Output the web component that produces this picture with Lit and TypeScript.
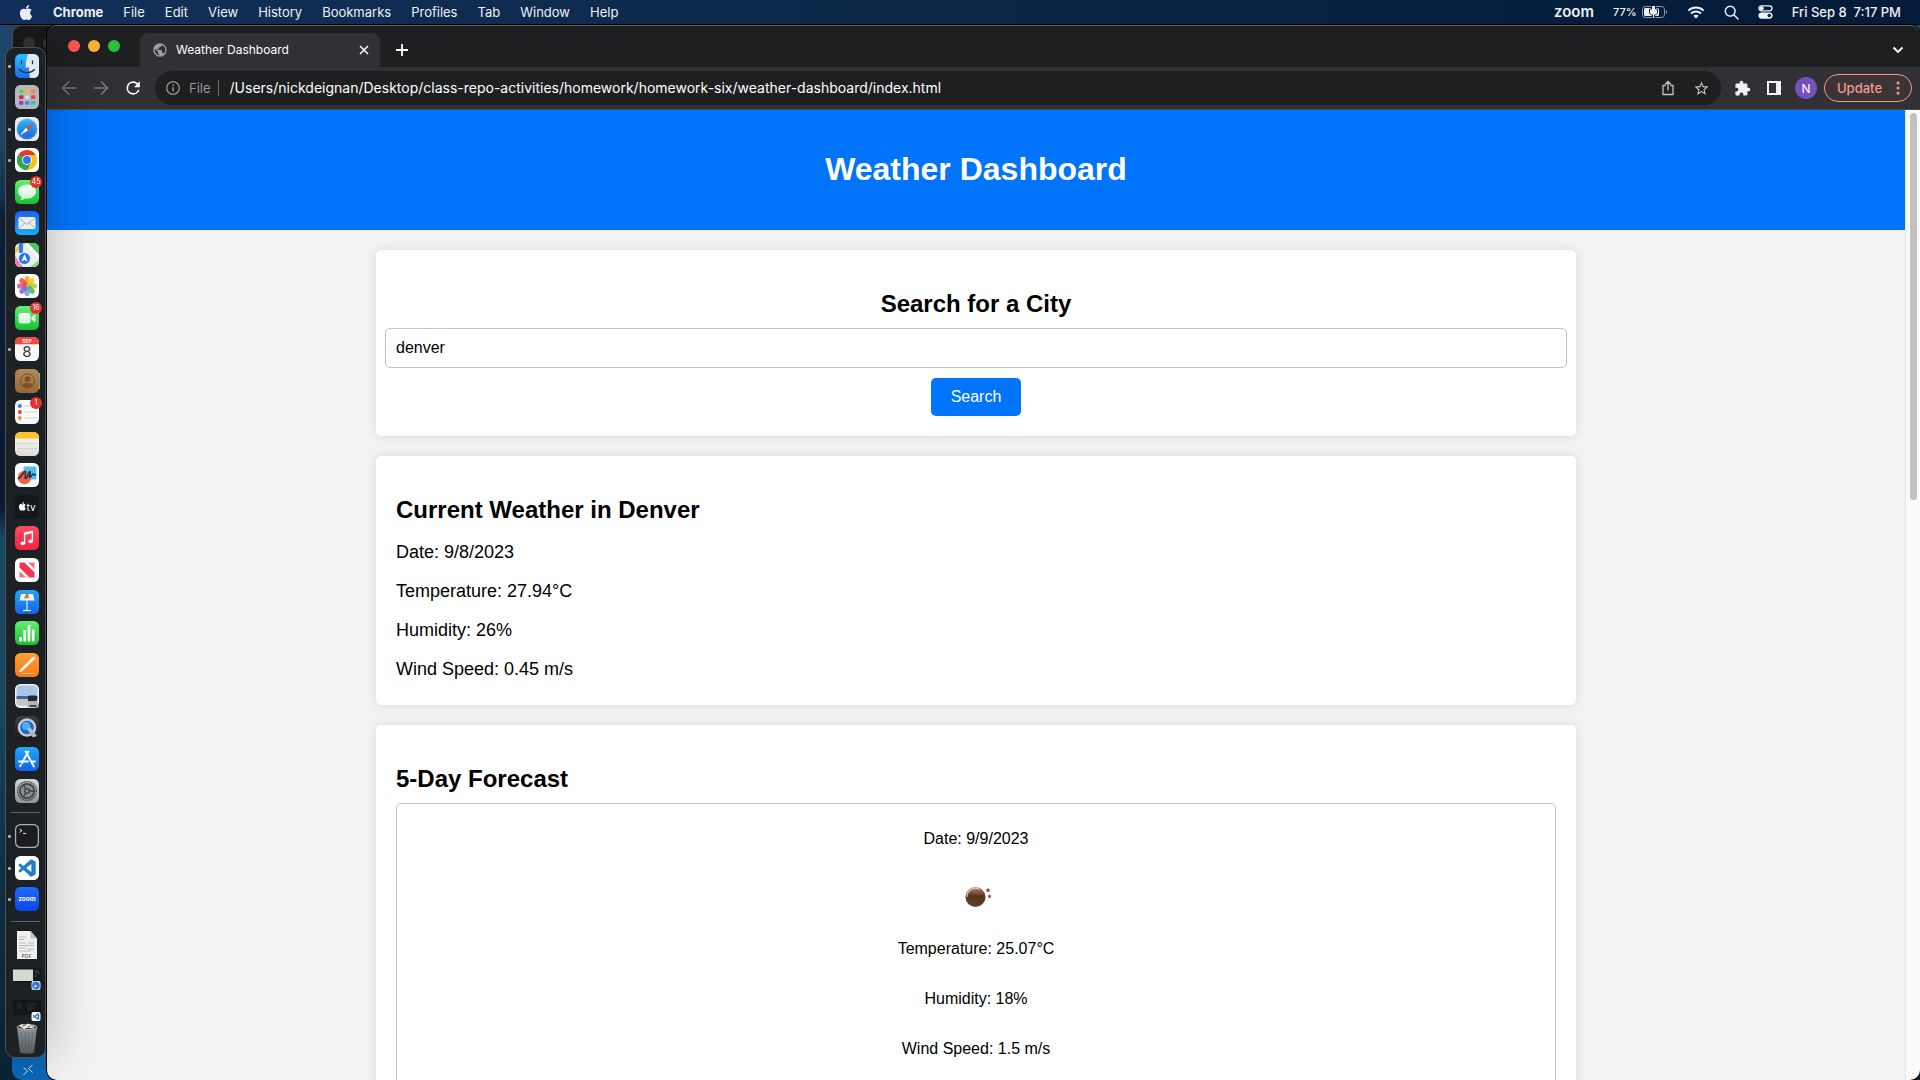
import { LitElement, html, css, svg, nothing, TemplateResult } from "lit";
import { customElement, property } from "lit/decorators.js";

type Glyph = ReturnType<typeof svg>;

interface DockItem {
  name: string;
  art: Glyph;
  running?: boolean;
  badge?: string;
}

const appleMark =
  "M12.152 6.896c-.948 0-2.415-1.078-3.96-1.04-2.04.027-3.91 1.183-4.961 3.014-2.117 3.675-.546 9.103 1.519 12.09 1.013 1.454 2.208 3.09 3.792 3.039 1.52-.065 2.09-.987 3.935-.987 1.831 0 2.35.987 3.96.948 1.637-.026 2.676-1.48 3.676-2.948 1.156-1.688 1.636-3.325 1.662-3.415-.039-.013-3.182-1.221-3.22-4.857-.026-3.04 2.48-4.494 2.597-4.559-1.429-2.09-3.623-2.324-4.39-2.376-2-.156-3.675 1.09-4.61 1.09zM15.53 3.83c.843-1.012 1.4-2.427 1.245-3.83-1.207.052-2.662.805-3.532 1.818-.78.896-1.454 2.338-1.273 3.714 1.338.104 2.715-.688 3.559-1.701";
const codeMark =
  "M23.15 2.587L18.21.21a1.494 1.494 0 0 0-1.705.29l-9.46 8.63-4.12-3.128a.999.999 0 0 0-1.276.057L.327 7.261A1 1 0 0 0 .326 8.74L3.899 12 .326 15.26a1 1 0 0 0 .001 1.479L1.65 17.94a.999.999 0 0 0 1.276.057l4.12-3.128 9.46 8.63a1.492 1.492 0 0 0 1.704.29l4.942-2.377A1.5 1.5 0 0 0 24 20.06V3.939a1.5 1.5 0 0 0-.85-1.352zm-5.146 14.861L10.826 12l7.178-5.448v10.896z";

const tile = (fill: string) => svg`<rect width="24" height="24" rx="5.4" fill=${fill}/>`;
const fade = (id: string, a: string, b: string) => svg`
  <linearGradient id=${id} x1="0" y1="0" x2="0" y2="1">
    <stop offset="0" stop-color=${a}/><stop offset="1" stop-color=${b}/>
  </linearGradient>`;

const launchColors = ["#4fd964", "#f7b52c", "#f58b3c", "#d9272e", "#d9dbe0", "#ef3d63", "#8e44c9", "#2f8df5", "#35c7a6"];
const petals = ["#f9a01b", "#f6c913", "#a8cf45", "#55b05d", "#5aa9dd", "#7b6cc4", "#c45c9d", "#ef4b3f"];

const apps: DockItem[] = [
  {
    name: "Finder", running: true,
    art: svg`<clipPath id="fc"><rect width="24" height="24" rx="5.4"/></clipPath>${fade("fa", "#27c1fb", "#1a6cf0")}
      <g clip-path="url(#fc)"><rect width="24" height="24" fill="url(#fa)"/>
      <path d="M13 0H24V24H15C14.2 20 14 17 14 13.500H10.500C10.700 8 11.500 4 13 0Z" fill="#e3e8f0"/>
      <path d="M6.500 7v2.500M17.500 7v2.500" stroke="#17324f" stroke-width="1.300" stroke-linecap="round"/>
      <path d="M4.500 15.500c4 4.300 11 4.300 15 0" fill="none" stroke="#17324f" stroke-width="1.200" stroke-linecap="round"/></g>`,
  },
  {
    name: "Launchpad",
    art: svg`${tile("#b4b7bc")}${launchColors.map((c, i) => svg`<rect x=${4 + (i % 3) * 6} y=${4.4 + Math.floor(i / 3) * 5.8} width="4.400" height="3.800" rx="1" fill=${c}/>`)}`,
  },
  {
    name: "Safari", running: true,
    art: svg`${fade("sa", "#35b6f5", "#1b63d8")}${tile("#e9ebee")}<circle cx="12" cy="12" r="10.300" fill="url(#sa)"/>
      <circle cx="12" cy="12" r="9" fill="none" stroke="#cfe8fb" stroke-width=".8" stroke-dasharray=".5 1.500"/>
      <path d="M19 5.500L10.800 10.700 13.200 13.200Z" fill="#f0413a"/><path d="M5 18.500L10.800 10.700 13.200 13.200Z" fill="#f4f6f8"/>`,
  },
  {
    name: "Google Chrome", running: true,
    art: svg`${tile("#fff")}<path d="M12 12L3.340 7A10 10 0 0 1 20.660 7Z" fill="#e33b2e"/>
      <path d="M12 12L20.660 7A10 10 0 0 1 12 22Z" fill="#fbc116"/><path d="M12 12V22A10 10 0 0 1 3.340 7Z" fill="#2da94f"/>
      <path d="M12 7H20.660A10 10 0 0 1 12 22L16.330 14.500Z" fill="#fbc116"/><path d="M7.670 14.500L3.340 7A10 10 0 0 0 12 22L16.330 14.500Z" fill="#2da94f"/>
      <circle cx="12" cy="12" r="5" fill="#fff"/><circle cx="12" cy="12" r="4" fill="#2f74e8"/>`,
  },
  {
    name: "Messages", badge: "45",
    art: svg`${fade("ma", "#66ee70", "#17bf31")}${fade("mb", "#fff", "#c9efcf")}${tile("url(#ma)")}<path d="M12 4.500c5 0 9 3.100 9 7.100s-4 7.100-9 7.100c-.9 0-1.800-.1-2.600-.3-1.200 1-2.600 1.500-4 1.500.9-.8 1.300-1.700 1.300-2.600C4.400 16 3 14 3 11.600 3 7.600 7 4.500 12 4.500Z" fill="url(#mb)"/>`,
  },
  {
    name: "Mail",
    art: svg`${fade("mc", "#1c62ee", "#1ca9f9")}${tile("url(#mc)")}<rect x="3.500" y="6" width="17" height="12" rx="1.500" fill="#eceff2"/>
      <path d="M4 7l8 6.500L20 7M4 17.300l5.800-5.500M20 17.300l-5.800-5.500" fill="none" stroke="#8f979f" stroke-width=".8"/>`,
  },
  {
    name: "Maps",
    art: svg`<clipPath id="mp"><rect width="24" height="24" rx="5.400"/></clipPath><g clip-path="url(#mp)"><rect width="24" height="24" fill="#e9eeea"/>
      <path d="M12 0h12v12z" fill="#47c558"/><path d="M0 13l8 11H0z" fill="#ee7fae"/><path d="M0 6L6 0h5L0 11z" fill="#f3c53c"/><path d="M24 14L12 1" stroke="#fff" stroke-width="3"/><path d="M24 17v7h-9z" fill="#8dd694"/>
      <path d="M6 0v10" stroke="#2c7df0" stroke-width="4"/><circle cx="9.500" cy="15.500" r="6" fill="#2375ef" stroke="#fff" stroke-width=".8"/><path d="M9.500 11.300l3.200 7.200-3.200-1.500-3.200 1.500z" fill="#fff"/></g>`,
  },
  {
    name: "Photos",
    art: svg`${tile("#fff")}${petals.map((c, i) => svg`<rect x="9.400" y="2" width="5.200" height="9.400" rx="2.600" fill=${c} opacity=".88" transform=${`rotate(${i * 45} 12 12)`}/>`)}`,
  },
  {
    name: "FaceTime", badge: "16",
    art: svg`${tile("url(#ma)")}<rect x="3.500" y="7" width="12" height="10.500" rx="2.500" fill="url(#mb)"/><path d="M16.500 11l4-3v8.500l-4-3z" fill="#e3f8e6"/>`,
  },
  {
    name: "Calendar", running: true,
    art: svg`${tile("#fafafa")}<path d="M0 7.300V5.400A5.400 5.400 0 0 1 5.400 0H18.600A5.400 5.400 0 0 1 24 5.400V7.300Z" fill="#ee4a41"/>
      <text x="12" y="5.900" text-anchor="middle" font-size="5" font-weight="600" fill="#fff">SEP</text><text x="12" y="20" text-anchor="middle" font-size="15" font-weight="400" fill="#333">8</text>`,
  },
  {
    name: "Contacts",
    art: svg`<path d="M23 4h2v4h-2z" fill="#9aa0a6"/><path d="M23 8h2v4h-2z" fill="#37a3e8"/><path d="M23 12h2v4h-2z" fill="#59b95b"/><path d="M23 16h2v4h-2z" fill="#ef8c31"/>${fade("ct", "#b58a57", "#94683a")}${tile("url(#ct)")}
      <circle cx="12.500" cy="12" r="7" fill="none" stroke="#76512b"/><circle cx="12.500" cy="10" r="2.800" fill="#76512b"/><path d="M7.500 16.200c1.500-3.300 8.500-3.300 10 0-2 3-8 3-10 0z" fill="#76512b"/>`,
  },
  {
    name: "Reminders", badge: "1",
    art: svg`${tile("#fafafa")}<circle cx="4.800" cy="6" r="2" fill="#2f7df0"/><circle cx="4.800" cy="12" r="2" fill="#ef4136"/><circle cx="4.800" cy="18" r="2" fill="#f39330"/><path d="M9 6h13M9 12h13M9 18h13" stroke="#cfcfd2" stroke-width="1"/>`,
  },
  {
    name: "Notes",
    art: svg`${fade("nt", "#fafaf8", "#dfddd8")}${tile("url(#nt)")}<path d="M0 6.500V5.400A5.400 5.400 0 0 1 5.400 0H18.600A5.400 5.400 0 0 1 24 5.400V6.500Z" fill="#fcc42b"/><path d="M2 11.500H22M2 16.500H22" stroke="#cfcdc8" stroke-width=".7"/>`,
  },
  {
    name: "Freeform",
    art: svg`${tile("#fff")}<rect x="8.500" y="3.500" width="13" height="13" rx="1" fill="#4bc3f2"/><circle cx="9.500" cy="14.500" r="6.700" fill="#f2613f"/>
      <path d="M3.500 15.500C7 14 8.500 8 10 8.500s-1 7 .8 7S13.500 8 15 8.500s-1.500 6 0 6 2-4 3.200-3.500 1 1.500 2.300.8" fill="none" stroke="#15325c" stroke-width="1.500" stroke-linecap="round"/>`,
  },
  {
    name: "TV",
    art: svg`${tile("#10181a")}<path d=${appleMark} fill="#fff" transform="translate(3 7) scale(.36)"/><text x="16" y="15.700" text-anchor="middle" font-size="10" fill="#fff">tv</text>`,
  },
  {
    name: "Music",
    art: svg`${fade("mu", "#fb4c62", "#f82340")}${tile("url(#mu)")}<path d="M9 6.500L18 4.500V7L9 9Z" fill="#fff"/><path d="M9.600 7v10M17.400 5.500v9.500" stroke="#fff" stroke-width="1.300"/><ellipse cx="7.800" cy="17.300" rx="2.400" ry="1.900" fill="#fff"/><ellipse cx="15.600" cy="15.300" rx="2.400" ry="1.900" fill="#fff"/>`,
  },
  {
    name: "News",
    art: svg`${tile("#fff")}<path d="M4.500 4.500H9.500L19.500 14.500V19.500H14.500L4.500 9.500Z" fill="#f23455"/><path d="M13 4.500H19.500V11ZM4.500 13V19.500H11Z" fill="#f6728a"/>`,
  },
  {
    name: "Keynote",
    art: svg`${fade("kn", "#26a5f9", "#1464ea")}${tile("url(#kn)")}<path d="M6 4h12l1.500 6.500h-15z" fill="#f3f6fa"/><path d="M12 10.500V20" stroke="#e3edf8" stroke-width="1.200"/><path d="M8 20.500h8" stroke="#e3edf8" stroke-width="1.200"/><circle cx="12" cy="5.800" r="1.700" fill="#ef4c44"/><circle cx="10.600" cy="7.500" r="1.300" fill="#51b85c"/><circle cx="13.400" cy="7.500" r="1.300" fill="#f6b62c"/>`,
  },
  {
    name: "Numbers",
    art: svg`${tile("url(#ma)")}<path d="M4.200 16h2.700v4.500H4.200zM8.400 9h2.700v11.500H8.400zM12.600 4h2.700v16.500h-2.700zM16.800 8.500h2.700v12h-2.700z" fill="#f6fff6"/>`,
  },
  {
    name: "Pages",
    art: svg`${fade("pg", "#fca036", "#f77a1b")}${tile("url(#pg)")}<path d="M18.500 4l1.500 1.500L7.500 17.500 4.500 19l1.500-3z" fill="#fff" stroke="#fff" stroke-width=".7"/><path d="M7 20.500h13" stroke="#ffd7ab" stroke-width=".8"/>`,
  },
  {
    name: "Preview",
    art: svg`${tile("#eef1f4")}<rect x="1.500" y="1.500" width="21" height="20" rx="4" fill="#a9c6e8"/><path d="M1.500 12h21v3h-21z" fill="#3465a6"/><path d="M1.500 15h21v3a4 4 0 0 1-4 3.500h-13a4 4 0 0 1-4-3.500z" fill="#cfc5b5"/>
      <rect x="13" y="11.500" width="9" height="6" rx="1.500" fill="#222a30"/><path d="M14 17h8l2 6.500H12z" fill="#aeb4b8"/><path d="M15 21h6l.5 2h-7z" fill="#444"/>`,
  },
  {
    name: "QuickTime Player",
    art: svg`${fade("qt", "#3b3f44", "#17191b")}${tile("url(#qt)")}<circle cx="12" cy="11.500" r="9.300" fill="#c6ccd2"/><circle cx="12" cy="11.500" r="6.800" fill="#176bd6"/><circle cx="11" cy="10" r="4" fill="#4aaef7"/><path d="M12 13l3-2 7 9-4 1.500z" fill="#b4bac0"/>`,
  },
  {
    name: "App Store",
    art: svg`${fade("as", "#1eaaf9", "#1560ea")}${tile("url(#as)")}<path d="M13.300 4.500L7 16M10.700 4.500L17.500 17M4 14.500h9M16.500 14.500H20M5.800 18l-.6 1.200M18.300 18.500l.5 1" stroke="#fff" stroke-width="1.900" stroke-linecap="round"/>`,
  },
  {
    name: "System Settings",
    art: svg`${fade("ss", "#d4d6d8", "#8f9296")}${tile("url(#ss)")}<circle cx="12" cy="12" r="9.300" fill="none" stroke="#3d4043" stroke-width="1.500" stroke-dasharray="1 .6"/><circle cx="12" cy="12" r="7.200" fill="#8a8d91" stroke="#3d4043" stroke-width="1.700"/>
      <circle cx="12" cy="12" r="2.300" fill="none" stroke="#3d4043" stroke-width="1.300"/><path d="M14.300 12h5M10.900 10L8.400 5.700M10.900 14l-2.500 4.300" stroke="#3d4043" stroke-width="1.300"/>`,
  },
];

const openApps: DockItem[] = [
  {
    name: "Terminal", running: true,
    art: svg`${tile("#a5b4b8")}<rect x="1.200" y="1.200" width="21.600" height="21.600" rx="4.500" fill="#1c1c1e"/><path d="M4.500 5l2.500 1.700-2.500 1.700M8 9.500h3" fill="none" stroke="#e8e8e8" stroke-width="1"/>`,
  },
  {
    name: "Visual Studio Code", running: true,
    art: svg`${tile("#fff")}<path d=${codeMark} fill="#1f7fc9" transform="translate(3.400 3.400) scale(.72)"/>`,
  },
  {
    name: "zoom.us", running: true,
    art: svg`${fade("zm", "#1f6bff", "#0b45e8")}${tile("url(#zm)")}<text x="12" y="13.800" text-anchor="middle" font-size="6.500" font-weight="700" fill="#fff">zoom</text>`,
  },
];

const shelf: DockItem[] = [
  {
    name: "PDF document",
    art: svg`<path d="M2-2H15.500L22 5.500V26H2Z" fill="#f0f0ee"/><path d="M15.500-2V5.500H22Z" fill="#bfc0c0"/><path d="M4 4h7M4 6.500h5M4 10h7M13 10h6M4 12.500h15M4 15h7M13 16h6M4 18h12" stroke="#aaadaf" stroke-width=".8"/><text x="11.500" y="24.500" text-anchor="middle" font-size="5" fill="#444">PDF</text>`,
  },
  {
    name: "Minimized Safari window",
    art: svg`<g transform="translate(0 3)"><rect x="-2" y="1" width="28" height="15" fill="#14191b"/><rect x="-2" y="3" width="20" height="11" fill="#d5d8cf"/><path d="M-2 2.500h20" stroke="#77797a"/><path d="M19 4h5M20 6h5M19 9h3" stroke="#3f5a50" stroke-width=".8"/><rect x="16.500" y="14" width="9" height="9" rx="2" fill="#e9ebee"/><circle cx="21" cy="18.500" r="3.900" fill="#2483e8"/><path d="M23.500 16l-3.300 1.700 1.600 1.600z" fill="#f0413a"/><path d="M18.500 21l1.700-3.300 1.600 1.600z" fill="#fff"/></g>`,
  },
  {
    name: "Minimized Code window",
    art: svg`<g transform="translate(0 3)"><rect x="-2" y="1" width="28" height="15" fill="#141617"/><path d="M2 5h5M2 7h6M2 9h4M12 5h9M12 7h6M12 9h8M12 11h5" stroke="#33393d" stroke-width=".8"/><rect x="16.500" y="13" width="9" height="9" rx="2" fill="#fff"/><path d=${codeMark} fill="#1f7fc9" transform="translate(17.800 14.300) scale(.27)"/></g>`,
  },
  {
    name: "Trash",
    art: svg`${fade("tr", "#a3a8ab", "#5f6568")}<path d="M2 0H22L19 25.500C17 27 7 27 5 25.500Z" fill="url(#tr)" opacity=".85"/><ellipse cx="12" cy="0" rx="10" ry="2.600" fill="#3b3f42" stroke="#b8bcbf" stroke-width=".8"/>
      <path d="M4-1l3-2 3 2 3-2.500 3 2 4 0-2 3-5-1-4 1.500z" fill="#e8e8e6"/><path d="M7-1h2M13-.5h2M17 0h1.500" stroke="#d8483e" stroke-width="1.200"/><path d="M6 5l2 17M10 5l.8 18M14 5l-.8 18M18 5l-2 17" stroke="#4a4f52" stroke-width=".6" opacity=".6"/>`,
  },
];

@customElement("mac-menu-bar")
class MacMenuBar extends LitElement {
  static styles = css`
    :host { display: flex; align-items: center; height: 24px; padding: 0 19px; color: #edf1f5; font: 500 13px/24px Inter, "Liberation Sans", sans-serif; background: linear-gradient(90deg, #12305a, #0b2646 50%, #031a38); }
    nav { display: flex; gap: 20px; flex: 1; font-weight: 400; }
    button { all: unset; display: flex; align-items: center; white-space: pre; }
    .app { font-weight: 700; }
    .status { display: flex; align-items: center; gap: 19px; }
    .zoom { font-size: 15px; font-weight: 600; }
    .power { gap: 5px; font-size: 11px; }
    svg { display: block; }
  `;
  render() {
    return html`
      <nav aria-label="Menu bar">
        <button aria-label="Apple menu"><svg width="14" height="15" viewBox="1 0 22 24"><path d=${appleMark} fill="#edf1f5"/></svg></button>
        <button class="app">Chrome</button>
        ${["File", "Edit", "View", "History", "Bookmarks", "Profiles", "Tab", "Window", "Help"].map((m) => html`<button>${m}</button>`)}
      </nav>
      <div class="status">
        <button class="zoom">zoom</button>
        <button class="power"><span>77%</span><svg width="26" height="14" viewBox="0 0 26 14"><rect x=".5" y="1.500" width="22" height="11" rx="3" fill="none" stroke="#8d9cae"/><rect x="2" y="3" width="15" height="8" rx="1.500" fill="#edf1f5"/><path d="M24 5v4c1.500-.5 1.500-3.500 0-4z" fill="#8d9cae"/><path d="M9.500 1v3H7.500v3.500C7.500 9 9 10 10.500 10v3.500h2V10C14 10 15.500 9 15.500 7.500V4h-2V1" fill="#edf1f5" stroke="#0a2342" stroke-width="1"/></svg></button>
        <button aria-label="Wi-Fi"><svg width="18" height="13" viewBox="0 0 18 13" fill="none" stroke="#edf1f5" stroke-width="2"><path d="M1.300 4.600C5.500.4 12.500.4 16.700 4.600M4 7.500c2.800-2.800 7.200-2.800 10 0"/><path d="M9 12.500L6.300 9.800c1.500-1.300 3.900-1.300 5.400 0z" fill="#edf1f5" stroke="none"/></svg></button>
        <button aria-label="Spotlight"><svg width="15" height="15" viewBox="0 0 15 15" fill="none" stroke="#edf1f5" stroke-width="1.500" stroke-linecap="round"><circle cx="6.200" cy="6.200" r="4.900"/><path d="M9.800 9.800l4.200 4.200"/></svg></button>
        <button aria-label="Control Center"><svg width="15" height="14" viewBox="0 0 15 14"><rect x="1" y=".8" width="13" height="5" rx="2.500" fill="none" stroke="#edf1f5" stroke-width="1.300"/><circle cx="3.700" cy="3.300" r="2" fill="#edf1f5"/><rect x=".4" y="7.400" width="14.200" height="6.300" rx="3.100" fill="#edf1f5"/><circle cx="11.300" cy="10.500" r="1.800" fill="#0a2342"/></svg></button>
        <button>Fri Sep 8  7:17 PM</button>
      </div>`;
  }
}

@customElement("mac-dock")
class MacDock extends LitElement {
  static styles = css`
    :host { display: flex; flex-direction: column; box-sizing: border-box; padding: 2px 0; border: 1px solid #4b5154; border-radius: 10px; background: #1b2124; font-family: Inter, "Liberation Sans", sans-serif; }
    button { all: unset; position: relative; flex: 1 1 0; min-height: 0; display: flex; align-items: center; justify-content: center; padding-left: 3px; }
    svg { display: block; overflow: visible; flex: none; }
    hr { width: 29px; height: 1px; margin: 6px auto 7px; border: 0; background: #5b6164; }
    .dot { position: absolute; left: 2px; top: 50%; width: 3px; height: 3px; margin-top: -1px; border-radius: 1px; background: #a9adb0; }
    .badge { position: absolute; right: 3px; top: 0; width: 12px; height: 12px; border-radius: 50%; background: #e9312c; color: #fff; font-size: 7px; line-height: 12px; text-align: center; }
  `;
  private item(d: DockItem): TemplateResult {
    return html`<button aria-label=${d.name}>
      ${d.running ? html`<span class="dot"></span>` : nothing}
      <svg width="24" height="24" viewBox="0 0 24 24">${d.art}</svg>
      ${d.badge ? html`<span class="badge">${d.badge}</span>` : nothing}
    </button>`;
  }
  render() {
    return html`${apps.map((d) => this.item(d))}<hr />${openApps.map((d) => this.item(d))}<hr />${shelf.map((d) => this.item(d))}`;
  }
}

@customElement("browser-chrome")
class BrowserChrome extends LitElement {
  static styles = css`
    :host { display: block; background: #1e1f21; color: #fff; font-family: Inter, "Liberation Sans", sans-serif; }
    button { all: unset; display: flex; align-items: center; justify-content: center; }
    svg { display: block; }
    .strip { display: flex; align-items: stretch; height: 41px; padding: 0 16px 0 21px; }
    .lights { display: flex; gap: 8px; padding-top: 14px; width: 72px; }
    .lights button { width: 12px; height: 12px; border-radius: 50%; }
    .red { background: #fe5350; }
    .amber { background: #fdb132; }
    .green { background: #2dc040; }
    .tab { display: flex; align-items: center; gap: 8px; box-sizing: border-box; width: 240px; margin-top: 7px; padding: 0 11px 0 12px; border-radius: 8px 8px 0 0; background: #303035; font-size: 12px; line-height: 16px; }
    .tab span { flex: 1; }
    .plus { margin: 7px 0 0 15px; }
    .more { margin: 7px 0 0 auto; }
    .bar { display: flex; align-items: center; height: 43px; box-sizing: border-box; padding: 0 8px 0 13px; border-bottom: 1px solid #4a4b4f; background: #303035; }
    .nav { display: flex; gap: 14px; width: 95px; }
    .omni { display: flex; align-items: center; flex: 1; height: 34px; box-sizing: border-box; padding: 0 11px; border-radius: 17px; background: #1e1f21; font-size: 14px; }
    .scheme { margin-left: 9px; padding-right: 7px; border-right: 1px solid #6b6c70; color: #97989c; line-height: 16px; font-size: 13px; }
    input { flex: 1; min-width: 0; margin: 0; padding: 0 0 0 11px; border: 0; outline: 0; background: none; color: #fff; font: 400 14px/20px Inter, "Liberation Sans", sans-serif; }
    .pair { display: flex; gap: 18px; }
    .tools { display: flex; align-items: center; margin-left: 13px; gap: 16px; }
    .avatar { width: 22px; height: 22px; margin: 0 -9px 0 -2px; border-radius: 50%; background: #7650ba; font-size: 12px; }
    .update { box-sizing: border-box; width: 88px; height: 28px; padding: 0 11px 0 12px; border: 1px solid #f29a94; border-radius: 14px; background: #3d3437; color: #f29a94; font-size: 13px; font-weight: 500; justify-content: space-between; }
  `;
  render() {
    return html`
      <div class="strip">
        <div class="lights">
          <button class="red" aria-label="Close window"></button><button class="amber" aria-label="Minimize window"></button><button class="green" aria-label="Zoom window"></button>
        </div>
        <div class="tab" role="tab">
          <svg width="16" height="16" viewBox="0 0 24 24" fill="#9aa0a6"><path d="M12 2C6.480 2 2 6.480 2 12s4.480 10 10 10 10-4.480 10-10S17.520 2 12 2zm-1 17.930c-3.950-.49-7-3.850-7-7.930 0-.62.08-1.210.21-1.790L9 15v1c0 1.100.9 2 2 2v1.930zm6.900-2.540c-.26-.81-1-1.390-1.900-1.390h-1v-3c0-.55-.45-1-1-1H8v-2h2c.55 0 1-.45 1-1V7h2c1.100 0 2-.9 2-2v-.41c2.930 1.190 5 4.060 5 7.410 0 2.080-.8 3.970-2.100 5.390z"/></svg>
          <span>Weather Dashboard</span>
          <button aria-label="Close tab"><svg width="10" height="10" viewBox="0 0 10 10"><path d="M1 1l8 8M9 1L1 9" stroke="#fff" stroke-width="1.500"/></svg></button>
        </div>
        <button class="plus" aria-label="New tab"><svg width="14" height="14" viewBox="0 0 14 14"><path d="M7 1v12M1 7h12" stroke="#fff" stroke-width="1.800"/></svg></button>
        <button class="more" aria-label="Search tabs"><svg width="12" height="8" viewBox="0 0 12 8"><path d="M1.500 1.500L6 6l4.500-4.500" fill="none" stroke="#fff" stroke-width="1.900"/></svg></button>
      </div>
      <div class="bar">
        <div class="nav">
          <button aria-label="Back"><svg width="18" height="18" viewBox="0 0 18 18" fill="none" stroke="#77787c" stroke-width="1.500"><path d="M16 9H3M9 2.500L2.500 9 9 15.500"/></svg></button>
          <button aria-label="Forward"><svg width="18" height="18" viewBox="0 0 18 18" fill="none" stroke="#77787c" stroke-width="1.500"><path d="M2 9h13M9 2.500L15.500 9 9 15.500"/></svg></button>
          <button aria-label="Reload"><svg width="20" height="20" viewBox="1 0 24 24" fill="#fff"><path d="M17.650 6.350A7.958 7.958 0 0 0 12 4a8 8 0 1 0 7.730 10h-2.080A6 6 0 1 1 12 6c1.660 0 3.140.69 4.220 1.780L13 11h7V4l-2.350 2.350z"/></svg></button>
        </div>
        <div class="omni">
          <svg width="14" height="14" viewBox="0 0 14 14" fill="none" stroke="#97989c" stroke-width="1.300"><circle cx="7" cy="7" r="6.300"/><path d="M7 6.300v4M7 3.500v1.500" stroke-width="1.500"/></svg>
          <span class="scheme">File</span>
          <input aria-label="Address and search bar" .value=${"/Users/nickdeignan/Desktop/class-repo-activities/homework/homework-six/weather-dashboard/index.html"} />
          <div class="pair">
            <button aria-label="Share"><svg width="14" height="16" viewBox="0 0 14 16" fill="none" stroke="#c2c3c6" stroke-width="1.300"><path d="M4.500 5.500H2V14.500H12V5.500H9.500M7 10.500V2M4 4.500L7 1.500l3 3"/></svg></button>
            <button aria-label="Bookmark this tab"><svg width="17" height="17" viewBox="0 0 24 24" fill="#c2c3c6"><path d="M22 9.240l-7.190-.62L12 2 9.190 8.630 2 9.240l5.460 4.730L5.820 21 12 17.270 18.180 21l-1.630-7.030L22 9.240zM12 15.400l-3.760 2.270 1-4.280-3.320-2.880 4.380-.38L12 6.100l1.710 4.040 4.380.38-3.320 2.880 1 4.280L12 15.400z"/></svg></button>
          </div>
        </div>
        <div class="tools">
          <button aria-label="Extensions"><svg width="17" height="17" viewBox="0 0 24 24" fill="#f1f1f3"><path d="M20.500 11H19V7c0-1.100-.9-2-2-2h-4V3.500C13 2.120 11.880 1 10.500 1S8 2.120 8 3.500V5H4c-1.100 0-1.990.9-1.990 2v3.800H3.500c1.490 0 2.700 1.210 2.700 2.700s-1.210 2.700-2.700 2.700H2V20c0 1.100.9 2 2 2h3.800v-1.500c0-1.490 1.210-2.700 2.700-2.700 1.490 0 2.700 1.210 2.700 2.700V22H17c1.100 0 2-.9 2-2v-4h1.500c1.380 0 2.500-1.120 2.500-2.500S21.880 11 20.500 11z"/></svg></button>
          <button aria-label="Side panel"><svg width="14" height="14" viewBox="0 0 14 14"><path d="M0 0H14V14H0ZM2 2V12H9V2Z" fill="#f1f1f3" fill-rule="evenodd"/></svg></button>
          <button class="avatar" aria-label="Profile N">N</button>
          <button class="update">Update <svg width="4" height="14" viewBox="0 0 4 14" fill="#f29a94"><circle cx="2" cy="2" r="1.500"/><circle cx="2" cy="7" r="1.500"/><circle cx="2" cy="12" r="1.500"/></svg></button>
        </div>
      </div>`;
  }
}

@customElement("weather-dashboard")
class WeatherDashboard extends LitElement {
  @property() city = "Denver";
  static styles = css`
    :host { display: block; background: #f2f2f2; color: #000; font: 16px/18px "Liberation Sans", Arial, sans-serif; }
    header { padding: 40px 20px 42px; background: #0074fa; color: #fff; text-align: center; }
    h1 { margin: 0; font-size: 32px; line-height: 38px; }
    h2 { margin: 20px 0 10px; font-size: 24px; line-height: 28px; }
    main { display: flex; flex-direction: column; gap: 20px; max-width: 1200px; margin: 20px auto; }
    section { padding: 20px; border-radius: 5px; background: #fff; box-shadow: 0 0 10px rgba(0, 0, 0, 0.1); }
    .search { display: flex; flex-direction: column; align-items: center; padding: 20px 9px; }
    input { box-sizing: border-box; width: 100%; height: 40px; margin: 0 0 10px; padding: 10px; border: 1px solid #c4c4c4; border-radius: 5px; background: #fff; color: #000; font: inherit; }
    button { height: 38px; padding: 10px 20px; border: 0; border-radius: 5px; background: #0074fa; color: #fff; font: inherit; }
    .now { display: flex; flex-direction: column; gap: 18px; padding: 8px 0 5px; font-size: 18px; line-height: 21px; }
    p { margin: 0; }
    .day { display: flex; flex-direction: column; align-items: center; gap: 32px; padding: 26px 10px; border: 1px solid #c4c4c4; border-radius: 5px; }
    .day svg { display: block; margin: -16px 0; padding: 5px 0; }
  `;
  render() {
    return html`
      <header><h1>Weather Dashboard</h1></header>
      <main>
        <section class="search">
          <h2><label for="city">Search for a City</label></h2>
          <input id="city" type="text" .value=${"denver"} />
          <button>Search</button>
        </section>
        <section>
          <h2>Current Weather in ${this.city}</h2>
          <div class="now"><p>Date: 9/8/2023</p><p>Temperature: 27.94°C</p><p>Humidity: 26%</p><p>Wind Speed: 0.45 m/s</p></div>
        </section>
        <section>
          <h2>5-Day Forecast</h2>
          <div class="day">
            <p>Date: 9/9/2023</p>
            <svg width="50" height="50" viewBox="0 0 50 50" role="img" aria-label="Clear night">
              <defs><linearGradient id="moon" x1="0" y1="0" x2="0" y2="1"><stop offset="0" stop-color="#b98a72"/><stop offset=".3" stop-color="#7d4f3b"/><stop offset=".45" stop-color="#55321f"/><stop offset="1" stop-color="#65402c"/></linearGradient></defs>
              <circle cx="24.500" cy="28" r="10" fill="url(#moon)"/><path d="M16 28a8.500 8.500 0 0 1 12-8" fill="none" stroke="#e6c7b8" stroke-width="1.200"/>
              <g fill="#6b4433"><path d="M37 18.700l.7 1.600 1.800.1-1.400 1.200.5 1.800-1.600-1-1.600 1 .5-1.800-1.400-1.200 1.800-.1z"/><path d="M38.500 25.300l.6 1.300 1.500.1-1.200 1 .4 1.500-1.300-.8-1.300.8.4-1.500-1.200-1 1.500-.1z"/></g>
            </svg>
            <p>Temperature: 25.07°C</p><p>Humidity: 18%</p><p>Wind Speed: 1.5 m/s</p>
          </div>
        </section>
      </main>`;
  }
}

@customElement("app-root")
class AppRoot extends LitElement {
  static styles = css`
    :host { display: flex; flex-direction: column; height: 100vh; overflow: hidden; background: linear-gradient(180deg, #1d4770 0, #264f76 12%, #16395c 18%, #0c2340 20%, #0b1e38 47%, #1c5473 50%, #195070 65%, #103a55 78%, #0b2338 100%); }
    .desk { position: relative; flex: 1; min-height: 0; display: flex; background: linear-gradient(#000, #000) top / 100% 1px no-repeat; }
    .rear { position: absolute; left: 12px; width: 60px; top: 1px; height: 60px; box-sizing: border-box; border: 1px solid #4b4b4d; border-radius: 10px; background: #18191a; }
    .rear i { position: absolute; left: 10px; top: 11px; width: 12px; height: 12px; border-radius: 50%; background: #333436; box-shadow: 20px 0 #333436; }
    .remote { position: absolute; left: 12px; bottom: 0; width: 50px; height: 40px; border-radius: 0 0 0 10px; background: #0b69b8; }
    .remote svg { position: absolute; left: 10px; bottom: 4px; }
    mac-dock { position: relative; z-index: 2; width: 41px; margin: 23px 1px 22px 5px; box-shadow: 0 0 50px rgba(0, 0, 0, 0.28); }
    .window { position: relative; flex: 1; min-width: 0; display: flex; flex-direction: column; margin-top: 1px; border-top: 1px solid #5c5d60; border-radius: 10px; overflow: hidden; box-shadow: 0 0 0 1px #000; }
    browser-chrome { flex: none; }
    .view { display: flex; flex: 1; min-height: 0; }
    weather-dashboard { flex: 1; min-width: 0; overflow: hidden; }
    .track { width: 15px; box-sizing: border-box; padding: 3px 3px 0 4px; border-left: 1px solid #e5e5e5; background: #fafafa; }
    .thumb { height: 40%; border-radius: 4px; background: #c1c1c1; }
  `;
  render() {
    return html`
      <mac-menu-bar></mac-menu-bar>
      <div class="desk">
        <div class="rear"><i></i></div>
        <div class="remote"><svg width="12" height="12" viewBox="0 0 12 12" fill="none" stroke="#cfe3f3" stroke-width="1"><path d="M1.500 3.500l4 3.500-4 4M10.500 1l-4 3.500 4 4"/></svg></div>
        <mac-dock></mac-dock>
        <div class="window">
          <browser-chrome></browser-chrome>
          <div class="view">
            <weather-dashboard></weather-dashboard>
            <div class="track"><div class="thumb"></div></div>
          </div>
        </div>
      </div>`;
  }
}
